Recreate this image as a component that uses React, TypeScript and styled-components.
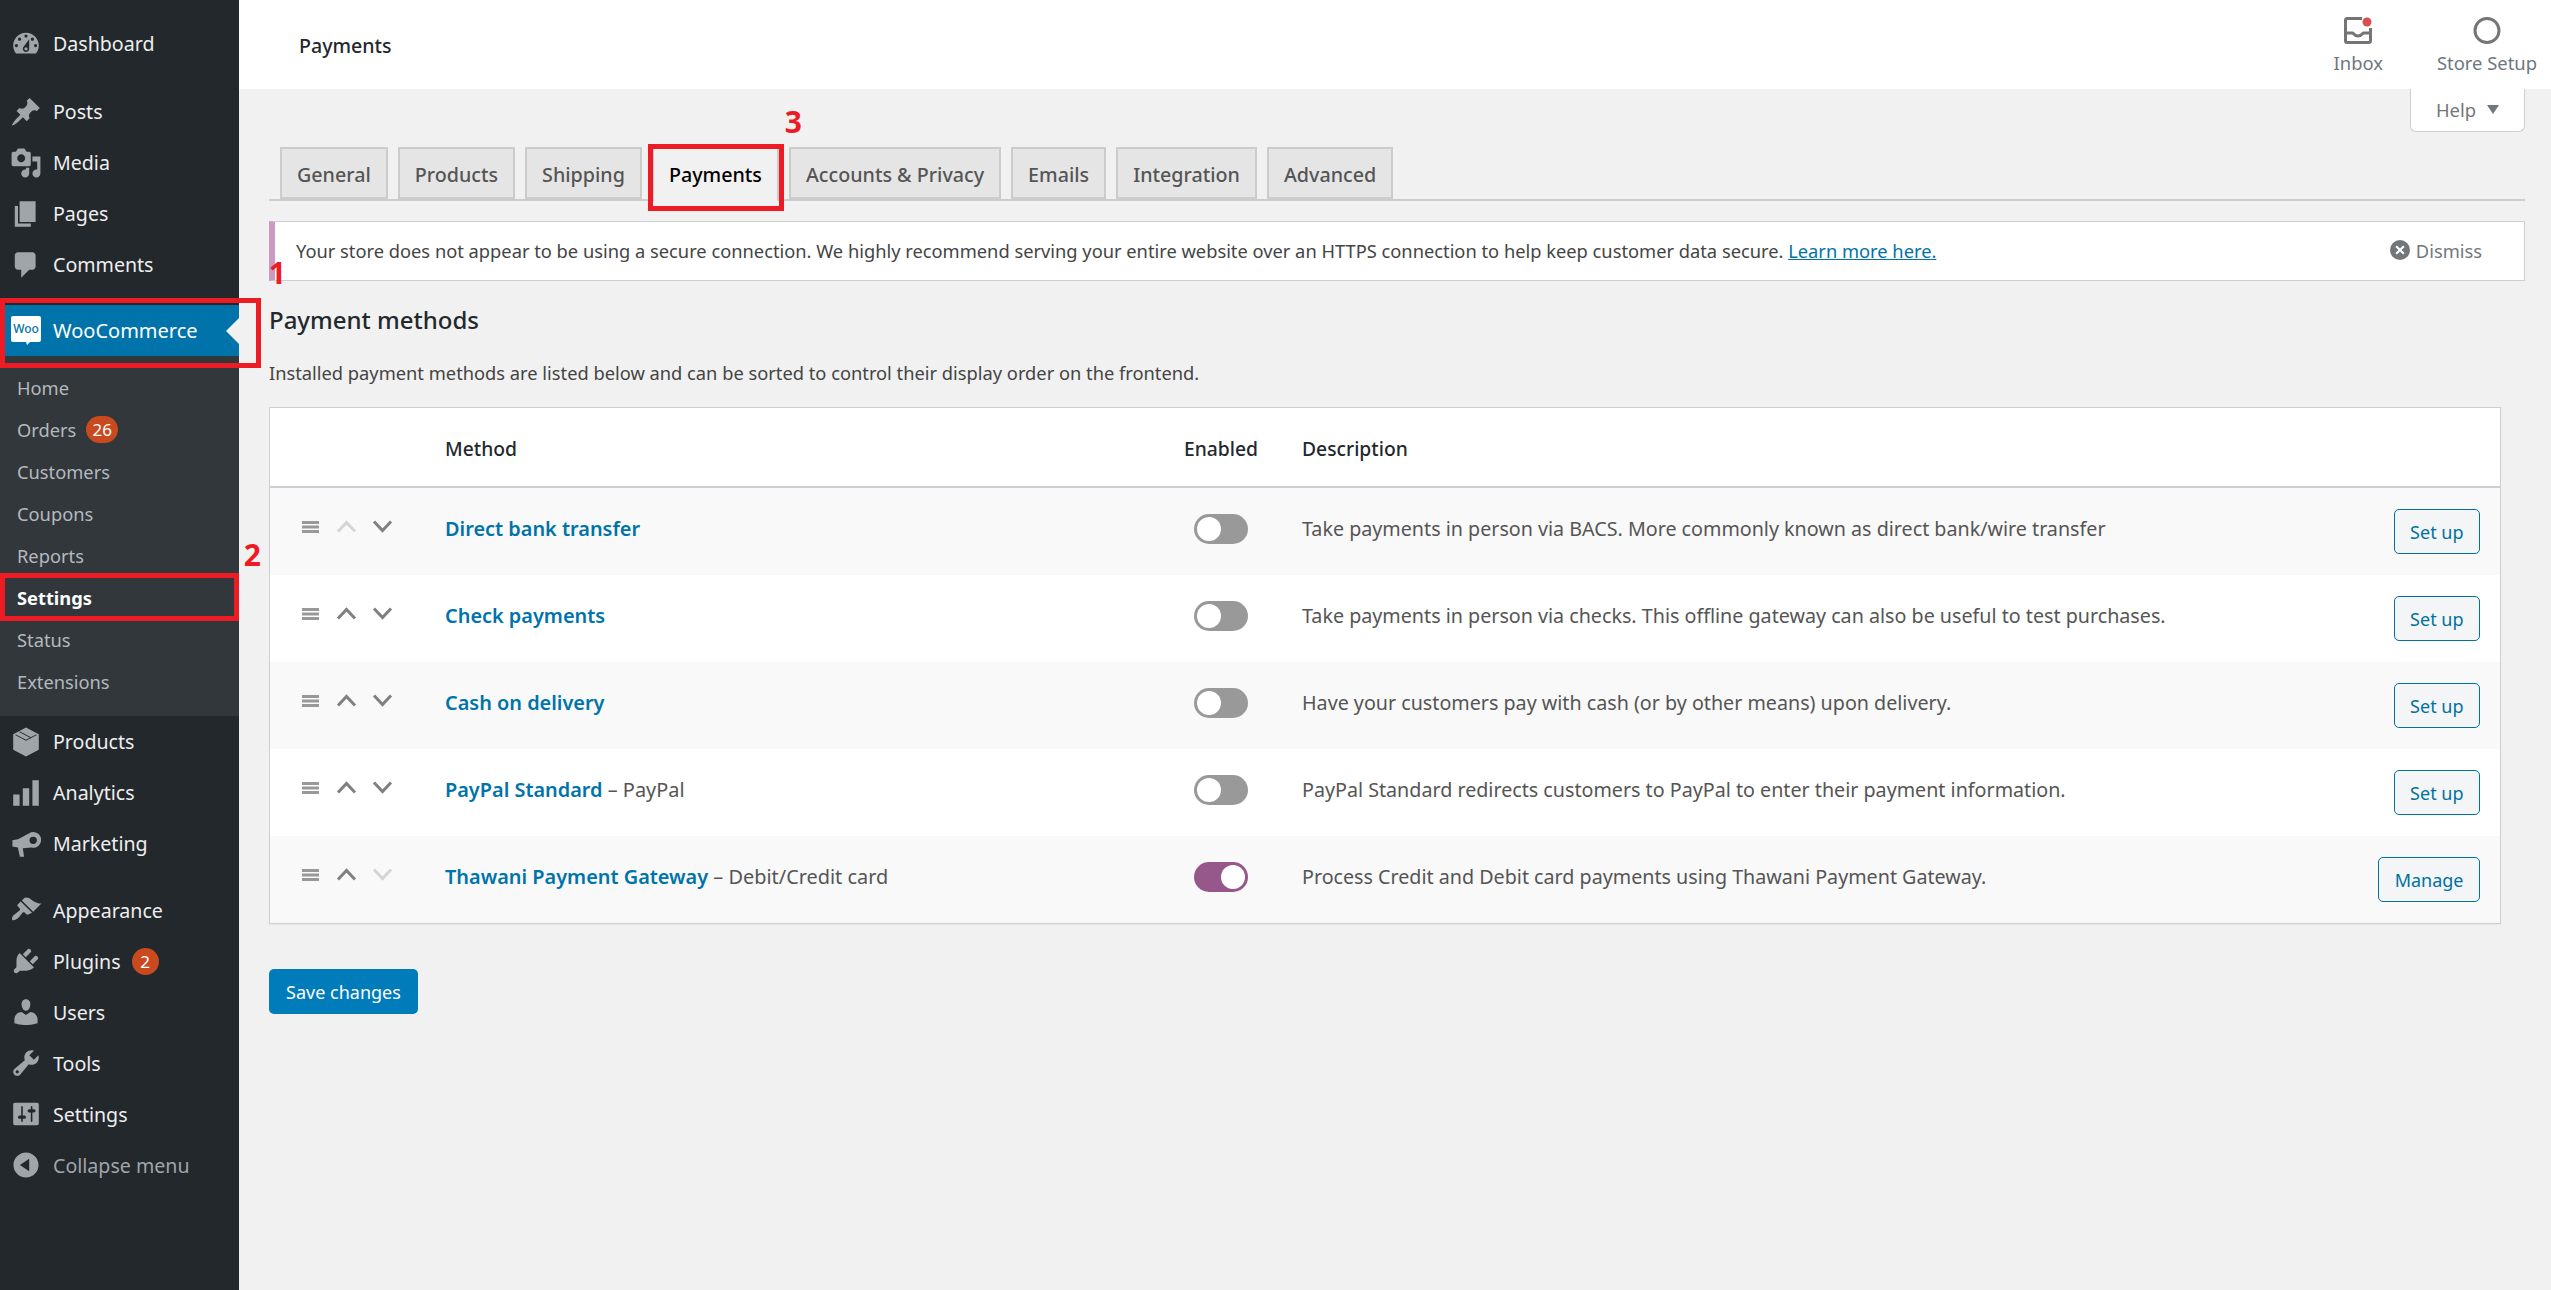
import React from 'react';
import styled, { createGlobalStyle } from 'styled-components';

const FONT = '"Noto Sans", "Open Sans", sans-serif';

const GlobalStyle = createGlobalStyle`
  html, body {
    margin: 0;
    background: #f1f1f1;
    overflow: hidden;
  }
  * {
    box-sizing: border-box;
  }
  body {
    font-family: ${FONT};
    font-size: 20px;
    color: #444;
  }
`;

const ICONS: Record<string, string> = {
  dashboard:
    'M3.76 16h12.48c1.1-1.37 1.76-3.11 1.76-5 0-4.42-3.58-8-8-8s-8 3.58-8 8c0 1.89.66 3.63 1.76 5zM10 4c.55 0 1 .45 1 1s-.45 1-1 1-1-.45-1-1 .45-1 1-1zM6 6c.55 0 1 .45 1 1s-.45 1-1 1-1-.45-1-1 .45-1 1-1zm8 0c.55 0 1 .45 1 1s-.45 1-1 1-1-.45-1-1 .45-1 1-1zm-5.37 5.55L12 7v6c0 1.1-.9 2-2 2s-2-.9-2-2c0-.57.24-1.08.63-1.45zM4 10c.55 0 1 .45 1 1s-.45 1-1 1-1-.45-1-1 .45-1 1-1zm12 0c.55 0 1 .45 1 1s-.45 1-1 1-1-.45-1-1 .45-1 1-1zm-5 3c0-.55-.45-1-1-1s-1 .45-1 1 .45 1 1 1 1-.45 1-1z',
  post:
    'M10.44 3.02l1.82-1.82 6.36 6.35-1.83 1.82c-1.05-.68-2.48-.57-3.41.36l-.75.75c-.92.93-1.04 2.35-.35 3.41l-1.83 1.82-2.41-2.41-2.8 2.79c-.42.42-3.38 2.71-3.8 2.29s1.86-3.39 2.28-3.81l2.79-2.79L4.1 9.36l1.83-1.82c1.05.69 2.48.57 3.4-.36l.75-.75c.93-.92 1.05-2.35.36-3.41z',
  media:
    'M13 11V4c0-.55-.45-1-1-1h-1.67L9 1H5L3.67 3H2c-.55 0-1 .45-1 1v7c0 .55.45 1 1 1h10c.55 0 1-.45 1-1zM7 4.5c1.38 0 2.5 1.12 2.5 2.5S8.38 9.5 7 9.5 4.5 8.38 4.5 7 5.62 4.5 7 4.5zM14 6h5v10.5c0 1.38-1.12 2.5-2.5 2.5S14 17.88 14 16.5s1.12-2.5 2.5-2.5c.17 0 .34.02.5.05V9h-3V6zm-4 8.05V13h2v3.5c0 1.38-1.12 2.5-2.5 2.5S7 17.88 7 16.5 8.12 14 9.5 14c.17 0 .34.02.5.05z',
  page: 'M6 15V2h10v13H6zm-1 1h8v2H3V5h2v11z',
  comments:
    'M5 2h9c1.1 0 2 .9 2 2v7c0 1.1-.9 2-2 2h-2l-5 5v-5H5c-1.1 0-2-.9-2-2V4c0-1.1.9-2 2-2z',
  products:
    'M10 1 18 5.2v9.6L10 19l-8-4.2V5.2zM3.2 5.6 10 9.2l6.8-3.6-.5-.3L10 8.6 3.7 5.3zM6.3 3.5l-.6.3 6.8 3.6.6-.3z',
  analytics: 'M2 11h4v7H2zM8 7h4v11H8zM14 2h4v16h-4z',
  marketing:
    'M1.5 7.6 5 7l8.2-4.3a4.9 4.9 0 1 1 .3 9.5L8 12.6l.8 5.4H6.2L4.9 12.2 1.5 11.6zM14.5 5.4a2.3 2.3 0 1 0 0 4.6 2.3 2.3 0 0 0 0-4.6z',
  appearance:
    'M14.48 11.06L7.41 3.99l1.5-1.5c.5-.56 2.3-.47 3.51.32 1.21.8 1.43 1.28 2.91 2.1 1.18.64 2.45 1.26 4.45.85zm-.71.71L6.7 4.7 4.93 6.47c-.39.39-.39 1.02 0 1.41l1.06 1.06c.39.39.39 1.03 0 1.42-.6.6-1.43 1.11-2.21 1.69-.35.26-.7.53-1.01.84C1.43 13.71.96 15.52 1.4 16.2c.6.6 2.54.04 3.89-1.31.31-.31.58-.66.84-1.01.58-.78 1.09-1.61 1.69-2.21.39-.39 1.03-.39 1.42 0l1.06 1.06c.39.39 1.02.39 1.41 0z',
  plugins:
    'M13.11 4.36L9.87 7.6 8 5.73l3.24-3.24c.35-.34 1.05-.2 1.56.32.52.51.66 1.21.31 1.55zm-8 1.77l.91-1.12 9.01 9.01-1.19.84c-.71.71-2.63 1.16-3.82 1.16H6.14L4.9 17.26c-.59.59-1.54.59-2.12 0-.59-.58-.59-1.53 0-2.12l1.24-1.24v-3.88c0-1.13.4-3.19 1.09-3.89zm7.26 3.97l3.24-3.24c.34-.35 1.04-.21 1.55.31.52.51.66 1.21.31 1.55l-3.24 3.25z',
  users:
    'M10 9.25c-2.27 0-2.73-3.44-2.73-3.44C7 4.02 7.82 2 9.97 2c2.16 0 2.98 2.02 2.71 3.81 0 0-.41 3.44-2.68 3.44zm0 2.57L12.72 10c2.39 0 4.52 2.33 4.52 4.53v2.49s-3.65 1.13-7.24 1.13c-3.65 0-7.24-1.13-7.24-1.13v-2.49c0-2.25 1.94-4.48 4.47-4.48z',
  tools:
    'M16.68 9.77c-1.34 1.34-3.3 1.67-4.95.99l-5.41 6.52c-.99.99-2.59.99-3.58 0s-.99-2.59 0-3.57l6.52-5.42c-.68-1.65-.35-3.61.99-4.95 1.28-1.28 3.12-1.62 4.72-1.06l-2.89 2.89 2.82 2.82 2.86-2.87c.53 1.58.18 3.39-1.08 4.65zM3.81 16.21c.4.39 1.04.39 1.43 0 .4-.4.4-1.04 0-1.43-.39-.4-1.03-.4-1.43 0-.39.39-.39 1.03 0 1.43z',
  settings:
    'M18 16V4c0-.55-.45-1-1-1H3c-.55 0-1 .45-1 1v12c0 .55.45 1 1 1h14c.55 0 1-.45 1-1zM8 11h1c.55 0 1 .45 1 1s-.45 1-1 1H8v1.5c0 .28-.22.5-.5.5s-.5-.22-.5-.5V13H6c-.55 0-1-.45-1-1s.45-1 1-1h1V5.5c0-.28.22-.5.5-.5s.5.22.5.5V11zm5-2h-1c-.55 0-1-.45-1-1s.45-1 1-1h1V5.5c0-.28.22-.5.5-.5s.5.22.5.5V7h1c.55 0 1 .45 1 1s-.45 1-1 1h-1v5.5c0 .28-.22.5-.5.5s-.5-.22-.5-.5V9z',
  collapse:
    'M10 2.16c4.33 0 7.84 3.51 7.84 7.84s-3.51 7.84-7.84 7.84S2.16 14.33 2.16 10 5.71 2.16 10 2.16zm2 11.72V6.12L6.18 9.97z',
};

const Page = styled.div`
  display: flex;
  min-height: 100vh;
`;

const Sidebar = styled.nav`
  position: relative;
  z-index: 2;
  flex: 0 0 239px;
  padding-top: 18px;
  background: #23282d;
`;

const MenuGroup = styled.div<{ $gap?: number }>`
  margin-bottom: ${(p) => p.$gap ?? 17}px;
`;

const MenuItem = styled.div<{ $muted?: boolean }>`
  display: flex;
  align-items: center;
  gap: 11px;
  height: 51px;
  padding-left: 10px;
  font-size: 19.6px;
  color: ${(p) => (p.$muted ? '#a0a5aa' : '#eee')};
`;

const MenuIcon = styled.svg`
  flex: none;
  width: 32px;
  height: 32px;
  fill: #a0a5aa;
`;

const ActiveItem = styled(MenuItem)`
  position: relative;
  margin-top: -2px;
  font-size: 20px;
  color: #fff;
  background: #0073aa;

  &::after {
    content: '';
    position: absolute;
    top: 50%;
    right: 0;
    margin-top: -13px;
    border: 13px solid transparent;
    border-right-color: #f1f1f1;
    border-left-width: 0;
  }
`;

const RedFrame = styled.span`
  position: absolute;
  border: 5px solid #ed1c24;
  pointer-events: none;
`;

const WooFrame = styled(RedFrame)`
  inset: -7px -22px -12px 0;
`;

const SettingsFrame = styled(RedFrame)`
  inset: -3px 0 -3px 0;
`;

const TabFrame = styled(RedFrame)`
  inset: -5px -7px -10px -6px;
`;

const Marker = styled.span`
  position: absolute;
  font-family: "Noto Sans", sans-serif;
  font-size: 30px;
  font-weight: 700;
  line-height: 1;
  color: #ed1c24;
`;

const WooMarker = styled(Marker)`
  top: -47px;
  right: -47px;
`;

const SettingsMarker = styled(Marker)`
  top: -36px;
  right: -22px;
`;

const TabMarker = styled(Marker)`
  top: -42px;
  right: -25px;
`;

const WooLogo = () => (
  <MenuIcon viewBox="0 0 32 32">
    <path
      d="M3 1h26a2 2 0 0 1 2 2v22a2 2 0 0 1-2 2h-9l-3 3-1-3H3a2 2 0 0 1-2-2V3a2 2 0 0 1 2-2z"
      fill="#fff"
    />
    <text
      x="16"
      y="18"
      textAnchor="middle"
      fontFamily='"Noto Sans", sans-serif'
      fontSize="12"
      fontWeight="500"
      fill="#0073aa"
    >
      Woo
    </text>
  </MenuIcon>
);

const SubMenu = styled.div`
  padding: 10px 0 14px;
  background: #32373c;
`;

const SubItem = styled.div<{ $active?: boolean }>`
  position: relative;
  display: flex;
  align-items: center;
  gap: 10px;
  height: 42px;
  padding-left: 17px;
  font-size: 18.3px;
  font-weight: ${(p) => (p.$active ? 700 : 400)};
  color: ${(p) => (p.$active ? '#fff' : '#b4b9be')};
`;

const Badge = styled.span<{ $wide?: boolean }>`
  display: inline-flex;
  align-items: center;
  justify-content: center;
  width: ${(p) => (p.$wide ? '32px' : '27px')};
  height: 27px;
  border-radius: 14px;
  font-size: 17px;
  font-weight: 400;
  color: #fff;
  background: #ca4a1f;
`;

const Main = styled.div`
  flex: 1;
  min-width: 0;
`;

const TopBar = styled.header`
  display: flex;
  justify-content: space-between;
  height: 89px;
  padding: 17px 14px 0 60px;
  background: #fff;
`;

const PageTitle = styled.h1`
  margin: 17px 0 0;
  font-size: 19.6px;
  font-weight: 500;
  line-height: 24px;
  color: #23282d;
`;

const TopActions = styled.div`
  display: flex;
  gap: 54px;
`;

const TopAction = styled.div`
  display: flex;
  flex-direction: column;
  align-items: center;
  font-size: 18.4px;
  line-height: 26px;
  color: #6c7781;
`;

const TopIcon = styled.svg`
  width: 28px;
  height: 27px;
  margin-bottom: 6px;
`;

const Content = styled.div`
  padding: 0 26px 0 30px;
`;

const HelpRow = styled.div`
  display: flex;
  justify-content: flex-end;
`;

const HelpTab = styled.div`
  display: flex;
  align-items: center;
  gap: 11px;
  height: 43px;
  padding: 0 25px 1px;
  border: 1px solid #ccd0d4;
  border-top: 0;
  border-radius: 0 0 6px 6px;
  font-size: 18.4px;
  color: #72777c;
  background: #fff;
`;

const HelpCaret = styled.span`
  width: 0;
  height: 0;
  border: 6px solid transparent;
  border-top: 9px solid #72777c;
  border-bottom: 0;
`;

const TabRow = styled.div`
  display: flex;
  gap: 10px;
  height: 54px;
  margin-top: 15px;
  padding-left: 11px;
  border-bottom: 2px solid #ccc;
`;

const Tab = styled.div<{ $active?: boolean }>`
  position: relative;
  display: flex;
  align-items: center;
  height: ${(p) => (p.$active ? '54px' : '52px')};
  padding: ${(p) => (p.$active ? '0 15px 2px' : '2px 15px 0')};
  border: 2px solid #ccc;
  border-bottom: ${(p) => (p.$active ? '0' : '2px solid #ccc')};
  font-size: 19.7px;
  font-weight: 500;
  color: ${(p) => (p.$active ? '#000' : '#555')};
  background: ${(p) => (p.$active ? '#f1f1f1' : '#e5e5e5')};
`;

const Notice = styled.div`
  position: relative;
  display: flex;
  align-items: center;
  justify-content: space-between;
  height: 60px;
  margin-top: 20px;
  padding: 0 42px 2px 21px;
  border: 1px solid #ccd0d4;
  border-left: 6px solid #cc99c2;
  font-size: 18.3px;
  color: #444;
  background: #fff;
`;

const NoticeLink = styled.a`
  color: #0073aa;
  text-decoration: underline;
`;

const Dismiss = styled.span`
  display: flex;
  align-items: center;
  gap: 6px;
  color: #72777c;
`;

const SectionTitle = styled.h2`
  margin: 21px 0 0;
  font-size: 24px;
  font-weight: 500;
  line-height: 36px;
  color: #23282d;
`;

const Lead = styled.p`
  margin: 20px 0 0;
  font-size: 18.3px;
  line-height: 30px;
  color: #444;
`;

const Table = styled.div`
  margin: 19px 24px 0 0;
  border: 1px solid #ccd0d4;
  box-shadow: 0 1px 1px rgba(0, 0, 0, 0.04);
  background: #fff;
`;

const Row = styled.div<{ $head?: boolean }>`
  display: grid;
  grid-template-columns: 175px 738px 76px 43px 1fr auto;
  align-items: center;
  height: ${(p) => (p.$head ? '80px' : '87px')};
  padding-right: 20px;
  border-bottom: ${(p) => (p.$head ? '2px solid #ccd0d4' : '0')};
  background: #fff;

  &:nth-child(even) {
    background: ${(p) => (p.$head ? '#fff' : '#f9f9f9')};
  }
`;

const HeadCell = styled.div<{ $centre?: boolean }>`
  padding-top: 2px;
  font-size: 19.3px;
  font-weight: 500;
  color: #23282d;
  text-align: ${(p) => (p.$centre ? 'center' : 'left')};
  white-space: nowrap;
`;

const Handles = styled.div`
  display: flex;
  align-items: center;
  gap: 15px;
  margin-bottom: 6px;
  padding: 0 0 4px 32px;
`;

const Grip = styled.svg`
  width: 17px;
  height: 12px;
  margin-right: 2px;
  fill: #999;
`;

const Chevron = styled.svg<{ $off?: boolean }>`
  width: 21px;
  height: 13px;
  fill: none;
  stroke: ${(p) => (p.$off ? '#d5d5d5' : '#808080')};
  stroke-width: 3;
`;

const MethodCell = styled.div`
  margin-bottom: 6px;
  font-size: 19.9px;
  color: #555;
  white-space: nowrap;
`;

const MethodLink = styled.a`
  font-weight: 600;
  color: #0073aa;
`;

const Toggle = styled.div<{ $on?: boolean }>`
  display: flex;
  justify-content: ${(p) => (p.$on ? 'flex-end' : 'flex-start')};
  align-items: center;
  width: 54px;
  height: 30px;
  margin: 0 auto 6px;
  padding: 0 3px;
  border-radius: 15px;
  background: ${(p) => (p.$on ? '#96588a' : '#999')};
`;

const Knob = styled.span`
  width: 24px;
  height: 24px;
  border-radius: 50%;
  background: #fff;
`;

const Description = styled.div`
  margin-bottom: 6px;
  font-size: 19.7px;
  color: #555;
  white-space: nowrap;
`;

const OutlineButton = styled.button`
  height: 45px;
  padding: 0 15.5px;
  border: 1.5px solid #0071a1;
  border-radius: 5px;
  font-family: inherit;
  font-size: 18px;
  color: #0071a1;
  background: #f3f5f6;
`;

const SaveButton = styled.button`
  display: block;
  width: 149px;
  height: 45px;
  margin-top: 45px;
  border: 0;
  border-radius: 5px;
  font-family: inherit;
  font-size: 18px;
  color: #fff;
  background: #007cba;
`;

type Item = { label: string; icon: string; badge?: string };

const Icon = ({ name }: { name: string }) => (
  <MenuIcon viewBox="0 0 20 20">
    <path d={ICONS[name]} />
  </MenuIcon>
);

const NavItems = ({ items }: { items: Item[] }) => (
  <>
    {items.map((item) => (
      <MenuItem key={item.label}>
        <Icon name={item.icon} />
        {item.label}
        {item.badge && <Badge>{item.badge}</Badge>}
      </MenuItem>
    ))}
  </>
);

const SUB_ITEMS = ['Home', 'Orders', 'Customers', 'Coupons', 'Reports', 'Settings', 'Status', 'Extensions'];

const TABS = ['General', 'Products', 'Shipping', 'Payments', 'Accounts & Privacy', 'Emails', 'Integration', 'Advanced'];

const METHODS = [
  {
    name: 'Direct bank transfer',
    text: 'Take payments in person via BACS. More commonly known as direct bank/wire transfer',
    up: false,
    down: true,
  },
  {
    name: 'Check payments',
    text: 'Take payments in person via checks. This offline gateway can also be useful to test purchases.',
    up: true,
    down: true,
  },
  {
    name: 'Cash on delivery',
    text: 'Have your customers pay with cash (or by other means) upon delivery.',
    up: true,
    down: true,
  },
  {
    name: 'PayPal Standard',
    extra: ' – PayPal',
    text: 'PayPal Standard redirects customers to PayPal to enter their payment information.',
    up: true,
    down: true,
  },
  {
    name: 'Thawani Payment Gateway',
    extra: ' – Debit/Credit card',
    text: 'Process Credit and Debit card payments using Thawani Payment Gateway.',
    up: true,
    down: false,
    on: true,
  },
];

export default function App() {
  return (
    <Page>
      <GlobalStyle />
      <Sidebar>
        <MenuGroup>
          <NavItems items={[{ label: 'Dashboard', icon: 'dashboard' }]} />
        </MenuGroup>
        <MenuGroup>
          <NavItems
            items={[
              { label: 'Posts', icon: 'post' },
              { label: 'Media', icon: 'media' },
              { label: 'Pages', icon: 'page' },
              { label: 'Comments', icon: 'comments' },
            ]}
          />
        </MenuGroup>
        <ActiveItem>
          <WooLogo />
          WooCommerce
          <WooFrame />
          <WooMarker>1</WooMarker>
        </ActiveItem>
        <SubMenu>
          {SUB_ITEMS.map((label) => (
            <SubItem key={label} $active={label === 'Settings'}>
              {label}
              {label === 'Orders' && <Badge $wide>26</Badge>}
              {label === 'Settings' && (
                <>
                  <SettingsFrame />
                  <SettingsMarker>2</SettingsMarker>
                </>
              )}
            </SubItem>
          ))}
        </SubMenu>
        <MenuGroup $gap={15.5}>
          <NavItems
            items={[
              { label: 'Products', icon: 'products' },
              { label: 'Analytics', icon: 'analytics' },
              { label: 'Marketing', icon: 'marketing' },
            ]}
          />
        </MenuGroup>
        <NavItems
          items={[
            { label: 'Appearance', icon: 'appearance' },
            { label: 'Plugins', icon: 'plugins', badge: '2' },
            { label: 'Users', icon: 'users' },
            { label: 'Tools', icon: 'tools' },
            { label: 'Settings', icon: 'settings' },
          ]}
        />
        <MenuItem $muted>
          <Icon name="collapse" />
          Collapse menu
        </MenuItem>
      </Sidebar>
      <Main>
        <TopBar>
          <PageTitle>Payments</PageTitle>
          <TopActions>
            <TopAction>
              <TopIcon viewBox="0 0 28 27">
                <path
                  d="M18 1.5H3A1.5 1.5 0 0 0 1.5 3v21A1.5 1.5 0 0 0 3 25.5h22a1.5 1.5 0 0 0 1.5-1.5V11M2 16h6.5c1 0 1.5 3 5.5 3s4.5-3 5.5-3H26"
                  fill="none"
                  stroke="#757575"
                  strokeWidth="3"
                />
                <circle cx="23" cy="5" r="4.5" fill="#d94f4f" />
              </TopIcon>
              Inbox
            </TopAction>
            <TopAction>
              <TopIcon viewBox="0 0 28 27">
                <circle cx="14" cy="13.5" r="12" fill="none" stroke="#757575" strokeWidth="3" />
              </TopIcon>
              Store Setup
            </TopAction>
          </TopActions>
        </TopBar>
        <Content>
          <HelpRow>
            <HelpTab>
              Help
              <HelpCaret />
            </HelpTab>
          </HelpRow>
          <TabRow>
            {TABS.map((tab) => (
              <Tab key={tab} $active={tab === 'Payments'}>
                {tab}
                {tab === 'Payments' && (
                  <>
                    <TabFrame />
                    <TabMarker>3</TabMarker>
                  </>
                )}
              </Tab>
            ))}
          </TabRow>
          <Notice>
            <span>
              Your store does not appear to be using a secure connection. We highly recommend serving your entire
              website over an HTTPS connection to help keep customer data secure.{' '}
              <NoticeLink>Learn more here.</NoticeLink>
            </span>
            <Dismiss>
              <svg width="20" height="20" viewBox="0 0 20 20">
                <path
                  fill="#72777c"
                  d="M10 0a10 10 0 1 1 0 20 10 10 0 0 1 0-20zm4.6 6.9-1.5-1.5L10 8.5 6.9 5.4 5.4 6.9 8.5 10l-3.1 3.1 1.5 1.5 3.1-3.1 3.1 3.1 1.5-1.5-3.1-3.1z"
                />
              </svg>
              Dismiss
            </Dismiss>
          </Notice>
          <SectionTitle>Payment methods</SectionTitle>
          <Lead>Installed payment methods are listed below and can be sorted to control their display order on the frontend.</Lead>
          <Table>
            <Row $head>
              <span />
              <HeadCell>Method</HeadCell>
              <HeadCell $centre>Enabled</HeadCell>
              <span />
              <HeadCell>Description</HeadCell>
            </Row>
            {METHODS.map((method) => (
              <Row key={method.name}>
                <Handles>
                  <Grip viewBox="0 0 17 12">
                    <path d="M0 0h17v3H0zM0 4.5h17v3H0zM0 9h17v3H0z" />
                  </Grip>
                  <Chevron viewBox="0 0 21 13" $off={!method.up}>
                    <path d="M2 11.5 10.5 2.5 19 11.5" />
                  </Chevron>
                  <Chevron viewBox="0 0 21 13" $off={!method.down}>
                    <path d="M2 1.5 10.5 10.5 19 1.5" />
                  </Chevron>
                </Handles>
                <MethodCell>
                  <MethodLink>{method.name}</MethodLink>
                  {method.extra}
                </MethodCell>
                <Toggle $on={method.on}>
                  <Knob />
                </Toggle>
                <span />
                <Description>{method.text}</Description>
                <OutlineButton>{method.on ? 'Manage' : 'Set up'}</OutlineButton>
              </Row>
            ))}
          </Table>
          <SaveButton>Save changes</SaveButton>
        </Content>
      </Main>
    </Page>
  );
}
